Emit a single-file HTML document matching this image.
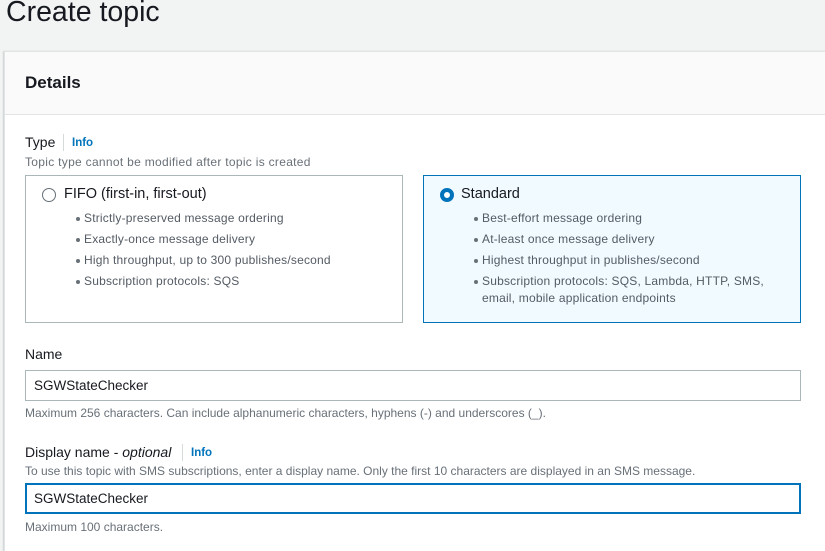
<!DOCTYPE html>
<html><head><meta charset="utf-8"><style>
*{margin:0;padding:0;box-sizing:border-box}
body{width:825px;height:544px;overflow:hidden;background:#f2f3f3;font-family:"Liberation Sans",sans-serif;color:#16191f;position:relative}
.a{position:absolute;white-space:nowrap}
.panel{position:absolute;left:4px;top:51px;width:830px;height:500px;background:#fff;border:1px solid #e1e4e4;border-right:none;border-bottom:none;box-shadow:-1px 0 1px rgba(0,28,36,.15)}
.hdr{position:absolute;left:5px;top:52px;width:830px;height:63px;background:#fafafa;border-bottom:1px solid #e1e4e4}
.info{color:#0073bb;font-weight:bold;font-size:11.5px}
.sep{position:absolute;width:1px;height:17px;background:#d5dbdb}
.hint{font-size:12px;color:#687078}
.card{position:absolute;top:175px;height:148px;width:378px;border:1px solid #aab7b8;background:#fff}
.card.sel{border-color:#0073bb;background:#f1faff}
.b{position:absolute;font-size:12px;color:#545b64;white-space:nowrap;line-height:17px;letter-spacing:0.2px}
.b:before{content:"";position:absolute;left:-8px;top:7px;width:4px;height:4px;border-radius:50%;background:#687078}
.inp{position:absolute;left:25px;width:776px;height:31px;border:1px solid #aab7b8;background:#fff;font-size:13.5px;padding-left:8px;line-height:29px}
</style></head><body>
<div class="a" style="left:6px;top:-4px;font-size:28.5px;color:#16191f">Create topic</div>
<div class="panel"></div>
<div class="hdr"></div>
<div class="a" style="left:25px;top:73px;font-size:17px;font-weight:bold">Details</div>
<div class="a" style="left:25px;top:134px;font-size:14px">Type</div>
<div class="sep" style="left:63px;top:134px"></div>
<div class="a info" style="left:72px;top:137px">Info</div>
<div class="a hint" style="left:25px;top:155px;letter-spacing:0.3px">Topic type cannot be modified after topic is created</div>

<div class="card" style="left:25px">
  <div style="position:absolute;left:16px;top:12px;width:14px;height:14px;border:1.5px solid #687078;border-radius:50%"></div>
  <div class="a" style="left:38px;top:10px;font-size:14.5px">FIFO (first-in, first-out)</div>
  <div class="b" style="left:58px;top:34px">Strictly-preserved message ordering</div>
  <div class="b" style="left:58px;top:55px">Exactly-once message delivery</div>
  <div class="b" style="left:58px;top:76px">High throughput, up to 300 publishes/second</div>
  <div class="b" style="left:58px;top:97px">Subscription protocols: SQS</div>
</div>
<div class="card sel" style="left:423px">
  <div style="position:absolute;left:16px;top:12px;width:14px;height:14px;border:4px solid #0073bb;border-radius:50%;background:#fff"></div>
  <div class="a" style="left:37px;top:10px;font-size:14.5px">Standard</div>
  <div class="b" style="left:58px;top:34px">Best-effort message ordering</div>
  <div class="b" style="left:58px;top:55px">At-least once message delivery</div>
  <div class="b" style="left:58px;top:76px">Highest throughput in publishes/second</div>
  <div class="b" style="left:58px;top:97px">Subscription protocols: SQS, Lambda, HTTP, SMS,<br>email, mobile application endpoints</div>
</div>

<div class="a" style="left:25px;top:346px;font-size:14px">Name</div>
<div class="inp" style="top:370px">SGWStateChecker</div>
<div class="a hint" style="left:25px;top:406px">Maximum 256 characters. Can include alphanumeric characters, hyphens (-) and underscores (_).</div>

<div class="a" style="left:25px;top:444px;font-size:14px">Display name - <i>optional</i></div>
<div class="sep" style="left:182px;top:444px"></div>
<div class="a info" style="left:191px;top:447px">Info</div>
<div class="a hint" style="left:25px;top:464px">To use this topic with SMS subscriptions, enter a display name. Only the first 10 characters are displayed in an SMS message.</div>
<div class="inp" style="top:483px;border:2px solid #0073bb;line-height:27px;padding-left:7px">SGWStateChecker</div>
<div class="a hint" style="left:25px;top:520px">Maximum 100 characters.</div>
</body></html>
